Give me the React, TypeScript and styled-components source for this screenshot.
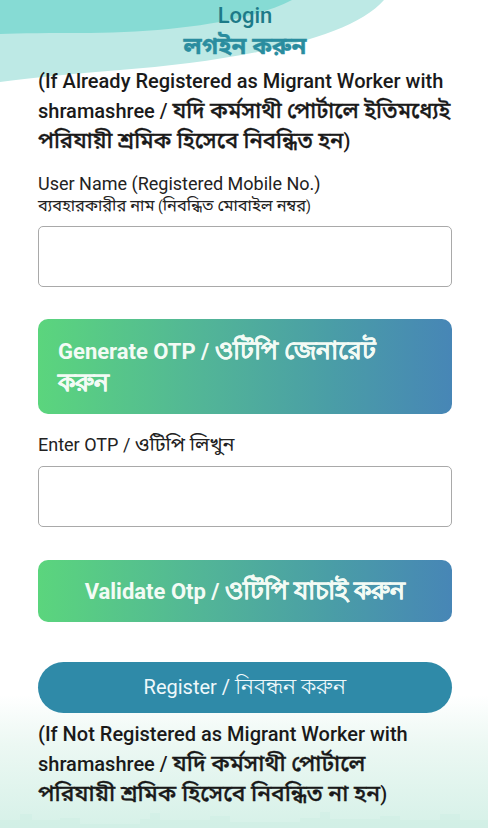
import styled, { createGlobalStyle } from 'styled-components'

const GlobalStyle = createGlobalStyle`
  html, body { margin: 0; padding: 0; }
  body {
    font-family: Roboto, "Noto Sans", "Noto Sans Bengali", sans-serif;
    background: #fff;
    color: #1c1c1c;
  }
  * { box-sizing: border-box; }
`

const Page = styled.div`
  position: relative;
  min-height: 828px;
  overflow: hidden;
  background: linear-gradient(
    to bottom,
    #ffffff 0px,
    #ffffff 695px,
    #ecf8f3 745px,
    #d6f1e8 828px
  );
`

const Wave = styled.svg`
  position: absolute;
  top: 0;
  left: 0;
  width: 488px;
  height: 100px;
`

const Skyline = styled.svg`
  position: absolute;
  left: 0;
  bottom: 0;
  width: 488px;
  height: 30px;
`

const Content = styled.div`
  position: relative;
  padding: 2px 36px 0 38px;
  display: flex;
  flex-direction: column;
`

const Header = styled.div`
  display: flex;
  flex-direction: column;
  align-items: center;
`

const Title = styled.div<{ $bn?: boolean }>`
  font-size: ${p => (p.$bn ? '20px' : '22px')};
  line-height: ${p => (p.$bn ? '32px' : '28px')};
  font-weight: ${p => (p.$bn ? 700 : 500)};
  color: ${p => (p.$bn ? '#2a8d9f' : '#1d7a88')};
`

/* Bengali runs: the fallback Bengali face is small next to Roboto */
const Bn = styled.span<{ $bold?: boolean; $scale?: number }>`
  font-size: ${p => p.$scale ?? 1.1}em;
  -webkit-text-stroke: ${p => (p.$bold ? '0.3px currentColor' : '0')};
`

const Note = styled.p<{ $top: number; $inset?: number }>`
  margin: ${p => p.$top}px 0 0;
  padding-right: ${p => p.$inset ?? 0}px;
  font-size: 20px;
  line-height: 29px;
  font-weight: 500;
  color: #1a1a1a;
`

const Label = styled.label<{ $top: number }>`
  display: block;
  margin-top: ${p => p.$top}px;
  font-size: 18px;
  line-height: 22px;
  color: #222;
`

const SubLabel = styled.div`
  font-size: 14px;
  line-height: 22px;
  color: #222;
`

const Field = styled.input<{ $top: number }>`
  display: block;
  width: 100%;
  height: 61px;
  margin-top: ${p => p.$top}px;
  border: 1.5px solid #a9a9a9;
  border-radius: 5px;
  background: #fff;
  outline: none;
  font-size: 16px;
  padding: 0 12px;
`

const GradientButton = styled.button<{ $top: number; $center?: boolean }>`
  display: block;
  width: 100%;
  margin-top: ${p => p.$top}px;
  border: none;
  border-radius: 10px;
  background: linear-gradient(to right, #5bd57d 0%, #52b597 40%, #4a9ea6 70%, #4786b6 100%);
  color: #f3fbf5;
  font-family: Roboto, "Noto Sans", sans-serif;
  font-size: 22px;
  font-weight: 700;
  line-height: 31px;
  text-align: ${p => (p.$center ? 'center' : 'left')};
  padding: ${p => (p.$center ? '15px 8px' : '16px 50px 15px 20px')};
`

const PillButton = styled.button`
  display: block;
  width: 100%;
  height: 51px;
  margin-top: 40px;
  border: none;
  border-radius: 26px;
  background: #2f8aa8;
  color: #eef8fb;
  font-family: Roboto, "Noto Sans", sans-serif;
  font-size: 20px;
  font-weight: 400;
`

export default function App() {
  return (
    <Page>
      <GlobalStyle />
      <Wave viewBox="0 0 488 100" preserveAspectRatio="none">
        <path d="M0 0 H384 C350 40 230 62 120 70 C70 74 30 78 0 82 Z" fill="#bde9e5" />
        <path d="M0 0 H292 C250 22 170 32 90 33 C50 33 20 33 0 34 Z" fill="#86dbd4" />
      </Wave>
      <Skyline viewBox="0 0 488 30" preserveAspectRatio="none">
        <path
          d="M0 30 V22 H20 V16 H32 V22 H60 V20 H80 V26 H140 V21 H150 V15 H160 V22 H210 V18 H230 V24 H300 V20 H320 V14 H330 V21 H380 V18 H400 V22 H440 V16 H460 V22 H488 V30 Z"
          fill="#cdeee3"
          opacity="0.5"
        />
      </Skyline>
      <Content>
        <Header>
          <Title>Login</Title>
          <Title $bn>
            <Bn $bold $scale={1.2}>লগইন করুন</Bn>
          </Title>
        </Header>
        <Note $top={4}>
          (If Already Registered as Migrant Worker with shramashree /{' '}
          <Bn $bold>যদি কর্মসাথী পোর্টালে ইতিমধ্যেই পরিযায়ী শ্রমিক হিসেবে নিবন্ধিত হন</Bn>)
        </Note>

        <Label $top={17}>User Name (Registered Mobile No.)</Label>
        <SubLabel>
          <Bn $scale={1.17}>ব্যবহারকারীর নাম</Bn> (<Bn $scale={1.17}>নিবন্ধিত মোবাইল নম্বর</Bn>)
        </SubLabel>
        <Field $top={9} type="text" />

        <GradientButton $top={32}>
          Generate OTP / <Bn $bold $scale={1.13}>ওটিপি জেনারেট করুন</Bn>
        </GradientButton>

        <Label $top={20}>
          Enter OTP / <Bn>ওটিপি লিখুন</Bn>
        </Label>
        <Field $top={10} type="text" />

        <GradientButton $top={33} $center>
          Validate Otp / <Bn $bold $scale={1.13}>ওটিপি যাচাই করুন</Bn>
        </GradientButton>

        <PillButton>
          Register / <Bn $scale={1.08}>নিবন্ধন করুন</Bn>
        </PillButton>

        <Note $top={7} $inset={12}>
          (If Not Registered as Migrant Worker with shramashree /{' '}
          <Bn $bold $scale={1.14}>যদি কর্মসাথী পোর্টালে পরিযায়ী শ্রমিক হিসেবে নিবন্ধিত না হন</Bn>)
        </Note>
      </Content>
    </Page>
  )
}
